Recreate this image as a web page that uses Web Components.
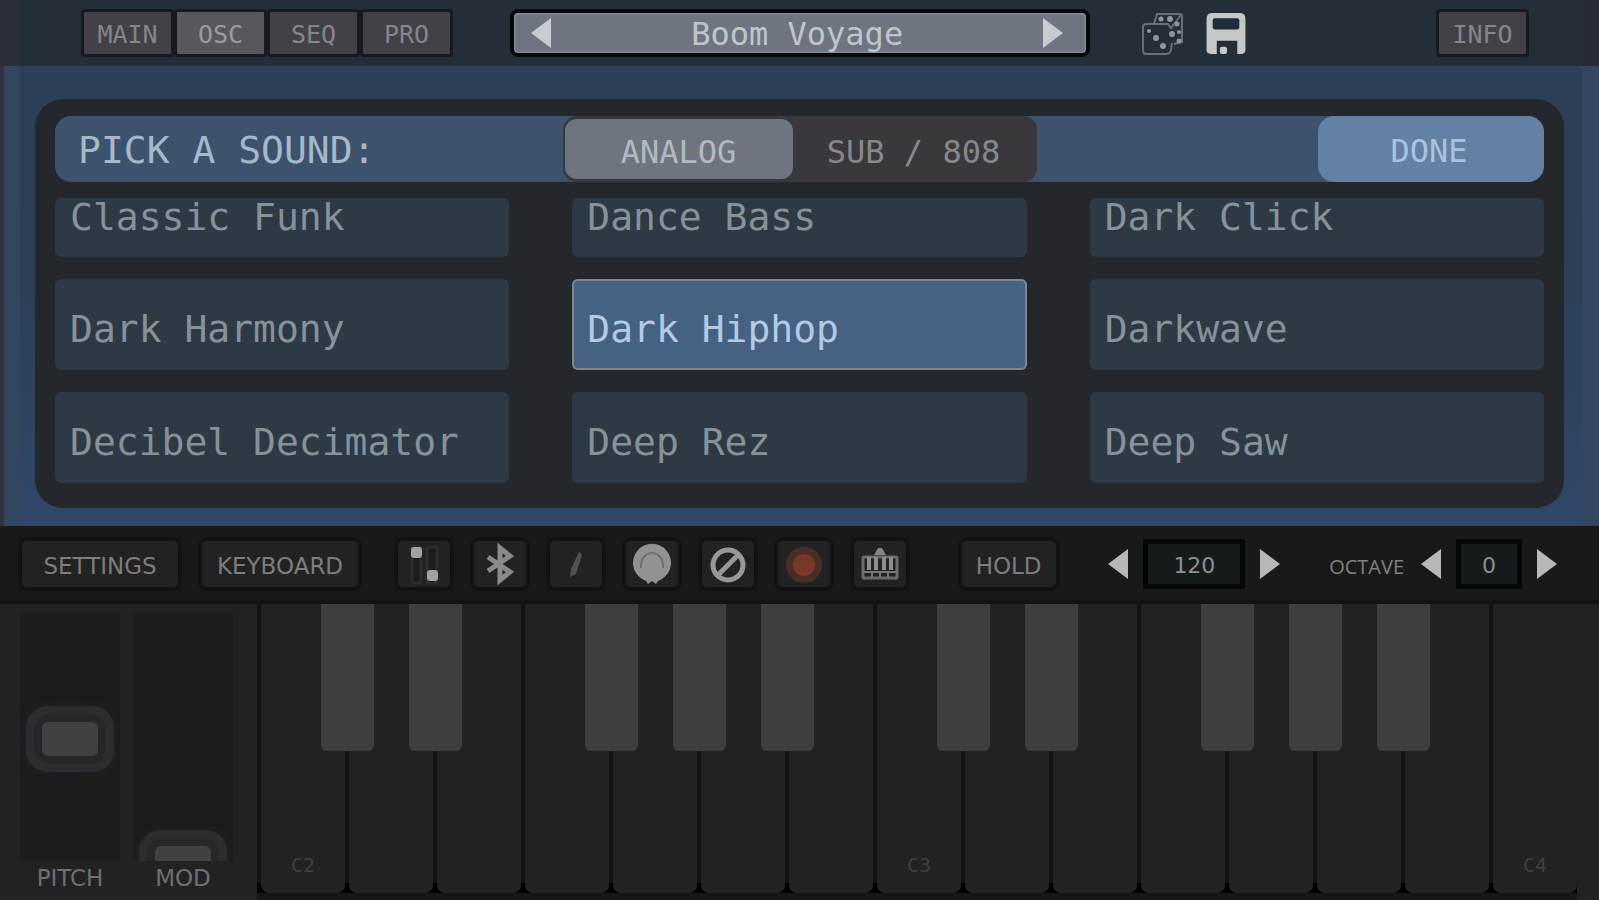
<!DOCTYPE html>
<html lang="en">
<head>
<meta charset="utf-8">
<title>Synth – Pick a sound</title>
<style>
  body { margin: 0; background: #222; }
</style>
</head>
<body>
<synth-app></synth-app>

<script>
const reset = `
  *, *::before, *::after { box-sizing: border-box; }
  button, input { font: inherit; color: inherit; margin: 0; padding: 0; border: 0; background: none; }
  button { cursor: pointer; }
`;
function define(name, css, html) {
  customElements.define(name, class extends HTMLElement {
    constructor() {
      super();
      const root = this.attachShadow({ mode: 'open' });
      root.innerHTML = `<style>${reset}${css}</style>` + (typeof html === 'function' ? html(this) : html);
    }
  });
}

/* Icons: tool icons share a 60 x 54 box, the size of a tool button */
const icons = {
  left: ['0 0 22 32', '<path d="M21 1V31L1 16Z" fill="currentColor"/>'],
  right: ['0 0 22 32', '<path d="M1 1V31L21 16Z" fill="currentColor"/>'],
  dice: ['0 0 42 43', `<g fill="none" stroke="#66707a" stroke-width="2">
      <path d="M13 12L16 2H39Q41 2 41 5V30L33 32"/><path d="M13 12H5Q2 12 2 15V38Q2 42 5 42H25Q29 42 30 38L31 31"/><path d="M13 12H27L30 16L40 3"/></g>
      <g fill="#8d969e"><circle cx="8" cy="19" r="2"/><circle cx="15" cy="26" r="3"/><circle cx="22" cy="34" r="3"/>
      <circle cx="20" cy="7" r="2.5"/><circle cx="29" cy="7" r="3"/><circle cx="36" cy="12" r="2.5"/><circle cx="31" cy="22" r="3"/><circle cx="38" cy="29" r="2.5"/><circle cx="38" cy="20" r="2"/></g>`],
  save: ['0 0 40 42', `<path d="M6 1H34Q39 1 39 7V37Q39 41 34 41H31V28H11V41H6Q1 41 1 37V7Q1 1 6 1Z" fill="#c6c8c6"/>
      <rect x="7" y="6" width="26" height="11" rx="2" fill="#202c3d"/><rect x="14" y="34" width="7" height="7" rx="2" fill="#c6c8c6"/>`],
  faders: ['0 0 60 54', `<g fill="#1d1d1d" stroke="#2d2d2d" stroke-width="3"><rect x="18" y="10" width="9" height="36" rx="2"/><rect x="33" y="10" width="10" height="36" rx="2"/></g>
      <rect x="17" y="10" width="11" height="11" rx="3" fill="#a2a2a2"/><rect x="33" y="33" width="11" height="11" rx="3" fill="#a2a2a2"/>`],
  bluetooth: ['0 0 60 54', '<path d="M18 20L40 35L30 43V11L40 19L18 34" fill="none" stroke="#8a8a8a" stroke-width="5"/>'],
  pencil: ['0 0 60 54', '<path d="M33 15L36 18L30 37L24 40L25 32Z" fill="#525252"/>'],
  dial: ['0 0 60 54', `<path d="M20 42L24 44L26 47L30 44L34 47L36 44L40 42A19 19 0 1 0 20 42Z" fill="#929292"/>
      <path d="M19 31V28A11 12 0 0 1 41 28V31" fill="none" stroke="#727272" stroke-width="2"/>`],
  block: ['0 0 60 54', '<g fill="none" stroke="#989898" stroke-width="5"><circle cx="30" cy="28" r="15"/><path d="M20 38L40 18"/></g>'],
  record: ['0 0 60 54', '<circle cx="30" cy="28" r="18" fill="#4c2d25"/><circle cx="30" cy="28" r="11" fill="#7a382b"/>'],
  piano: ['0 0 60 54', `<path d="M24 18L28 11H32L36 18Z" fill="#858585"/><rect x="13" y="20" width="34" height="21" rx="1" fill="none" stroke="#6c6c6c" stroke-width="3"/>
      <path d="M13 35H47M22 35V40M30 35V40M38 35V40" stroke="#777" stroke-width="2"/><path d="M19 20V33M26 20V33M34 20V33M41 20V33" stroke="#8e8e8e" stroke-width="4"/>`]
};
define('synth-icon', `
  :host { display: block; }
  svg { display: block; width: 100%; height: 100%; }
`, el => {
  const [box, art] = icons[el.getAttribute('name')];
  return `<svg viewBox="${box}" aria-hidden="true">${art}</svg>`;
});

/* Square-cornered button of the top bar */
define('bar-button', `
  :host { display: block; width: 93px; font: 25px/1 "DejaVu Sans Mono", monospace; color: #85868a; }
  button { display: block; width: 100%; height: 48px; border: 3px solid #161920; border-radius: 4px; background: #424147; padding-top: 2px; }
  :host([active]) button { background: #57575e; color: #9a9b9f; }
`, '<button type="button"><slot></slot></button>');

define('preset-picker', `
  :host { display: flex; align-items: center; width: 580px; height: 48px; padding: 0 22px 0 16px; border: 4px solid #05080b; border-radius: 8px;
    background: #6e7580; box-shadow: inset 0 0 3px #b0b5bc; color: #c8cbd0; font: 32px/1 "DejaVu Sans Mono", monospace; }
  button { width: 22px; }
  synth-icon { height: 32px; }
  output { flex: 1; text-align: center; padding-top: 2px; color: #c0c5cc; }
`, `<button type="button" aria-label="Previous preset"><synth-icon name="left"></synth-icon></button>
  <output><slot></slot></output>
  <button type="button" aria-label="Next preset"><synth-icon name="right"></synth-icon></button>`);

define('top-bar', `
  :host { display: flex; align-items: center; height: 66px; padding: 0 70px 0 81px;
    background: linear-gradient(90deg, #2a2e39 20px, #242e39 20px calc(100% - 18px), #262b34 calc(100% - 18px)); }
  nav { display: flex; }
  .space { flex: 57; } .space.small { flex: 51; } .space.large { flex: 188; }
  .actions { display: flex; gap: 22px; }
  .actions button { width: 42px; height: 43px; }
  .actions synth-icon { height: 43px; }
`, `<nav><bar-button>MAIN</bar-button><bar-button active>OSC</bar-button><bar-button>SEQ</bar-button><bar-button>PRO</bar-button></nav>
  <span class="space"></span>
  <preset-picker>Boom Voyage</preset-picker>
  <span class="space small"></span>
  <div class="actions">
    <button type="button" aria-label="Randomize"><synth-icon name="dice"></synth-icon></button>
    <button type="button" aria-label="Save"><synth-icon name="save"></synth-icon></button>
  </div>
  <span class="space large"></span>
  <bar-button>INFO</bar-button>`);

/* A sound of the list; "partial" is a row that is scrolled partly out of view */
define('sound-cell', `
  :host { display: block; font: 38px/1 "DejaVu Sans Mono", monospace; color: #86919a; }
  button { display: block; width: 100%; height: 91px; padding: 8px 15px 0; text-align: left; border-radius: 6px; background: #2d3945; white-space: nowrap; }
  :host([partial]) button { height: 59px; padding: 0 15px 22px; }
  :host([active]) button { background: #456283; color: #b4c9e3; box-shadow: inset 0 0 0 2px #7d858f; }
`, '<button type="button"><slot></slot></button>');

define('source-switch', `
  :host { display: grid; grid-template-columns: 228px 1fr; width: 474px; height: 66px; padding: 3px 2px; border-radius: 14px; background: #3a383c;
    font: 32px/1 "DejaVu Sans Mono", monospace; color: #87888b; }
  button { border-radius: 12px; padding-top: 6px; white-space: nowrap; }
  .on { background: #6f7580; color: #b3b9c1; }
`, '<button type="button" class="on" aria-pressed="true">ANALOG</button><button type="button" aria-pressed="false">SUB / 808</button>');

define('sound-browser', `
  :host { display: block; height: 460px; padding: 33px 35px 18px;
    background: linear-gradient(90deg, #30343c 4px, #34455f 4px 20px, transparent 20px calc(100% - 17px), #34455f calc(100% - 17px)),
      linear-gradient(#2d3e57, #2d4058 50%, #31476a); }
  section { padding: 17px 20px 25px; border-radius: 28px; background: #24282d; }
  header { display: grid; grid-template-columns: 1fr auto 1fr; align-items: center; height: 66px; border-radius: 16px; background: #3d536d;
    font: 32px/1 "DejaVu Sans Mono", monospace; }
  h1 { margin: 0; padding: 2px 0 0 23px; font-size: 38px; line-height: 1; font-weight: 400; color: #a5b9ca; white-space: nowrap; }
  .done { justify-self: end; width: 226px; height: 66px; padding: 4px 4px 0 0; border-radius: 16px; background: #6380a5; color: #a9c3df; }
  .list { display: grid; grid-template-columns: repeat(3, 1fr); gap: 22px 63px; margin-top: 16px; }
`, `<section>
    <header><h1>PICK A SOUND:</h1><source-switch></source-switch><button type="button" class="done">DONE</button></header>
    <div class="list">
      <sound-cell partial>Classic Funk</sound-cell><sound-cell partial>Dance Bass</sound-cell><sound-cell partial>Dark Click</sound-cell>
      <sound-cell>Dark Harmony</sound-cell><sound-cell active>Dark Hiphop</sound-cell><sound-cell>Darkwave</sound-cell>
      <sound-cell>Decibel Decimator</sound-cell><sound-cell>Deep Rez</sound-cell><sound-cell>Deep Saw</sound-cell>
    </div>
  </section>`);

define('tool-button', `
  :host { display: block; width: 60px; font: 23px/1 "DejaVu Sans", sans-serif; color: #7d7d7d; }
  :host([size=wide]) { width: 164px; }
  :host([size=medium]) { width: 102px; }
  button { display: grid; place-items: center; width: 100%; height: 54px; border: 4px solid #121212; border-radius: 9px; background: #222; }
  :host([size]) button { padding-top: 4px; }
  ::slotted(synth-icon) { width: 60px; height: 54px; margin: -4px; }
`, '<button type="button"><slot></slot></button>');

define('value-stepper', `
  :host { display: flex; align-items: center; gap: 14px; font: 22px/1 "DejaVu Sans", sans-serif; color: #b8b8b8; }
  button { width: 22px; }
  synth-icon { height: 32px; }
  input { width: 102px; height: 50px; padding-top: 2px; border: 5px solid #060606; background: #151a1b; color: #8b9092; text-align: center; border-radius: 2px; }
  :host([narrow]) input { width: 66px; }
`, el => `<button type="button" aria-label="Decrease"><synth-icon name="left"></synth-icon></button>
  <input type="text" aria-label="${el.getAttribute('label')}" value="${el.getAttribute('value')}">
  <button type="button" aria-label="Increase"><synth-icon name="right"></synth-icon></button>`);

define('tool-bar', `
  :host { display: flex; align-items: center; height: 78px; padding: 2px 41px 0 18px; background: #191919; border-bottom: 4px solid #131313; }
  .icons, .text { display: flex; gap: 16px; }
  .space { flex: 1; min-width: 8px; } .space.small { flex: 2; } .space.large { flex: 3; }
  .octave { font: 20px/1 "Open Sans", sans-serif; color: #808080; padding: 6px 16px 0 0; }
`, `<div class="text"><tool-button size="wide">SETTINGS</tool-button><tool-button size="wide">KEYBOARD</tool-button></div>
  <span class="space small"></span>
  <div class="icons">${['faders', 'bluetooth', 'pencil', 'dial', 'block', 'record', 'piano'].map(n => `<tool-button><synth-icon name="${n}"></synth-icon></tool-button>`).join('')}</div>
  <span class="space large"></span>
  <tool-button size="medium">HOLD</tool-button>
  <span class="space large"></span>
  <value-stepper label="Tempo" value="120"></value-stepper>
  <span class="space large"></span>
  <span class="octave">OCTAVE</span>
  <value-stepper narrow label="Octave" value="0"></value-stepper>`);

/* Pitch and mod wheels; the thumb may slide half out of its track */
define('synth-wheel', `
  :host { display: block; width: 100px; font: 23px/1 "DejaVu Sans", sans-serif; color: #6f6f6f; text-align: center; }
  .track { height: 248px; overflow: hidden; background: #1c1c1c; margin-bottom: 6px; }
  input { -webkit-appearance: none; appearance: none; display: block; writing-mode: vertical-lr; direction: rtl; width: 100px; height: 314px; margin: -31px 0; }
  input::-webkit-slider-thumb { -webkit-appearance: none; width: 88px; height: 66px; margin-left: 0; border: 8px solid #2c2d30; border-radius: 22px;
    background: #3f4145; box-shadow: inset 0 0 0 8px #26272b, 0 0 10px #242528; }
`, el => `<div class="track"><input id="w" type="range" value="${el.getAttribute('value')}"></div><label for="w"><slot></slot></label>`);

define('piano-key', `
  :host { display: block; position: relative; flex: 1; font: 20px/1 "DejaVu Sans Mono", monospace; color: #3d4040; }
  .white { display: flex; align-items: end; justify-content: center; width: 100%; height: 100%; padding-bottom: 18px; background: #222; border-radius: 0 0 8px 8px; }
  .black { position: absolute; z-index: 1; top: 0; left: calc(100% + 2px); width: 53px; height: 147px; margin-left: -26px; border-radius: 0 0 6px 6px; background: #3e3e40; }
`, el => `<button type="button" class="white" aria-label="White key"><slot></slot></button>` +
  (el.hasAttribute('sharp') ? '<button type="button" class="black" aria-label="Black key"></button>' : ''));

const sharps = [0, 1, 3, 4, 5];
const octaveNames = { 0: 'C2', 7: 'C3', 14: 'C4' };
define('piano-keys', `
  :host { display: flex; gap: 4px; padding: 0 0 0 4px; border-bottom: 7px solid #161616;
    background: linear-gradient(#131313 calc(100% - 10px), #000 calc(100% - 10px)); }
`, Array.from({ length: 15 }, (_, i) =>
  `<piano-key${i < 14 && sharps.includes(i % 7) ? ' sharp' : ''}>${octaveNames[i] || ''}</piano-key>`).join(''));

define('synth-app', `
  :host { display: flex; flex-direction: column; min-height: 100vh; background: #222; }
  main { flex: 1; display: flex; padding-right: 22px; }
  .wheels { display: flex; gap: 13px; padding: 9px 24px 0 20px; }
  piano-keys { flex: 1; min-height: 200px; }
`, `<top-bar></top-bar>
  <sound-browser></sound-browser>
  <tool-bar></tool-bar>
  <main>
    <div class="wheels"><synth-wheel value="50">PITCH</synth-wheel><synth-wheel value="0">MOD</synth-wheel></div>
    <piano-keys></piano-keys>
  </main>`);
</script>
</body>
</html>
